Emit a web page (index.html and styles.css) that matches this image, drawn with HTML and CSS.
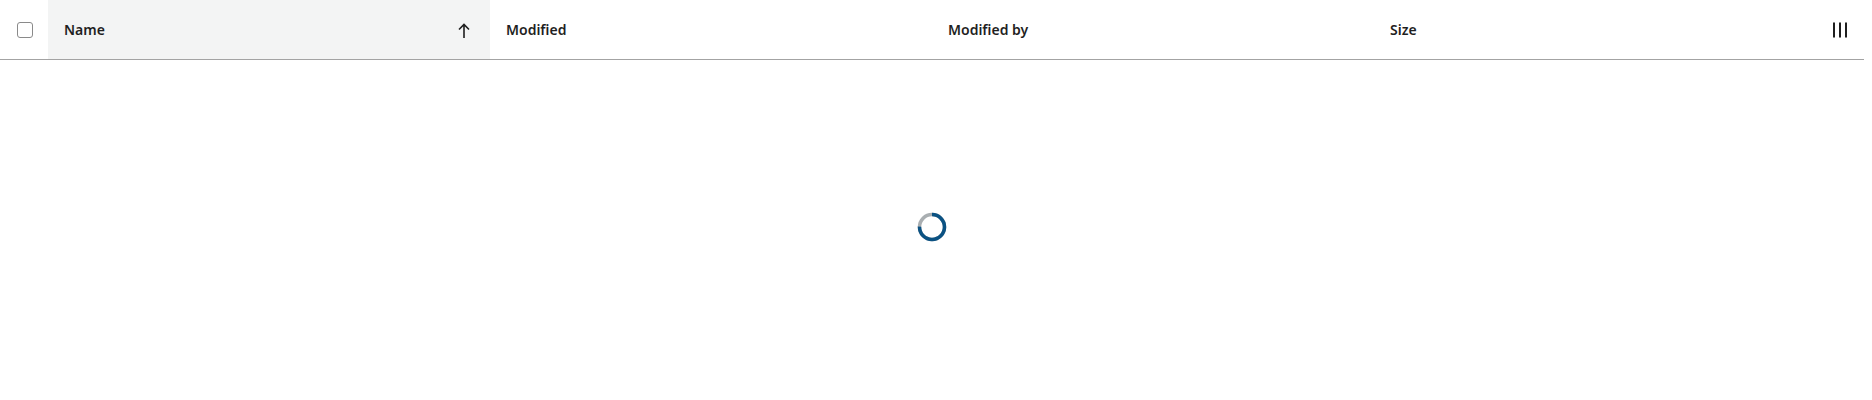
FILE: index.html
```html
<!DOCTYPE html>
<html>
<head>
<meta charset="utf-8">
<link rel="stylesheet" href="styles.css">
</head>
<body>
<div class="grid">
  <div class="header">
    <div class="cell check-cell"><span class="checkbox"></span></div>
    <div class="cell col sorted"><span class="label">Name</span>
      <svg class="sort" width="20" height="20" viewBox="0 0 20 20"><path d="M10 17V3.5M5 8.5L10 3.5L15 8.5" fill="none" stroke="#1f1f1f" stroke-width="1.6"/></svg>
    </div>
    <div class="cell col"><span class="label">Modified</span></div>
    <div class="cell col"><span class="label">Modified by</span></div>
    <div class="cell col"><span class="label">Size</span></div>
    <div class="cell chooser-cell">
      <svg width="18" height="16" viewBox="0 0 18 16"><rect x="2" y="0.5" width="2" height="15" fill="#1f1f1f"/><rect x="8" y="0.5" width="2" height="15" fill="#1f1f1f"/><rect x="14" y="0.5" width="2" height="15" fill="#1f1f1f"/></svg>
    </div>
  </div>
  <div class="body">
    <svg class="spinner" width="30" height="30" viewBox="0 0 30 30">
      <circle cx="15" cy="15" r="12.5" fill="none" stroke="#a9aeb1" stroke-width="3.5"/>
      <circle cx="15" cy="15" r="12.5" fill="none" stroke="#0b5283" stroke-width="3.5" stroke-dasharray="58.9 78.5" transform="rotate(-90 15 15)"/>
    </svg>
  </div>
</div>
</body>
</html>
```
FILE: styles.css
```css
html, body {
  margin: 0;
  padding: 0;
  background: #ffffff;
}
body {
  padding-right: 8px;
  font-family: "Noto Sans", "Open Sans", sans-serif;
  color: #1f1f1f;
}
.grid {
  width: 1864px;
}
.header {
  display: grid;
  grid-template-columns: 48px 442px 442px 442px 442px 48px;
  height: 59px;
  border-bottom: 1px solid #a3a3a3;
}
.cell {
  display: flex;
  align-items: center;
}
.check-cell {
  justify-content: center;
}
.checkbox {
  width: 14px;
  height: 14px;
  border: 1px solid #8a8a8a;
  border-radius: 3px;
  background: #fff;
  margin-left: 2px;
}
.col {
  padding: 0 16px;
  justify-content: space-between;
}
.sorted {
  background: #f3f4f4;
}
.label {
  font-size: 14px;
  font-weight: 600;
  line-height: 20px;
}
.sort {
  display: block;
  margin-top: 2px;
}
.chooser-cell {
  justify-content: center;
}
.chooser-cell svg {
  display: block;
  margin-top: 1px;
}
.body {
  height: 340px;
  display: flex;
  justify-content: center;
  align-items: flex-start;
  padding-top: 152px;
  box-sizing: border-box;
}
.spinner {
  display: block;
}
```
